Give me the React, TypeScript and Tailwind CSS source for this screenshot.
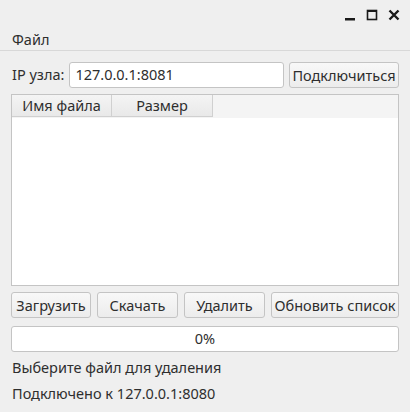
import React from 'react';

const font = { fontFamily: '"Noto Sans", "DejaVu Sans", sans-serif' };

const Btn = ({ children, className = '' }: { children: React.ReactNode; className?: string }) => (
  <button className={`h-[26px] rounded-[3px] border border-[#c4c4c4] bg-gradient-to-b from-[#f8f8f8] to-[#ececec] text-[14.5px] text-[#2e2e2e] leading-none ${className}`}>
    {children}
  </button>
);

export default function App() {
  return (
    <div className="w-[410px] h-[412px] bg-[#efefef] text-[#2e2e2e] text-[14.5px] overflow-hidden" style={font}>
      {/* Title bar */}
      <div className="h-[30px] flex items-center justify-end gap-[10px] pr-[10px]">
        <svg width="12" height="12" viewBox="0 0 12 12"><rect x="1" y="9" width="10" height="2.5" fill="#1a1a1a" /></svg>
        <svg width="12" height="12" viewBox="0 0 12 12"><rect x="1.5" y="1.5" width="9" height="9" fill="none" stroke="#1a1a1a" strokeWidth="1.6" /><rect x="1.5" y="1" width="9" height="2" fill="#1a1a1a" /></svg>
        <svg width="12" height="12" viewBox="0 0 12 12"><path d="M1.5 1.5 L10.5 10.5 M10.5 1.5 L1.5 10.5" stroke="#1a1a1a" strokeWidth="2.4" /></svg>
      </div>

      {/* Menu */}
      <div className="h-[21px] flex items-center px-[12px] border-b border-[#d8d8d8]">Файл</div>

      <div className="px-[11px] pt-[11px]">
        {/* IP row */}
        <div className="flex items-center gap-[5px] h-[26px]">
          <span className="pl-[1px]">IP узла:</span>
          <div className="flex-1 h-[26px] rounded-[3px] border border-[#c4c4c4] bg-white flex items-center px-[5px]">127.0.0.1:8081</div>
          <Btn className="w-[110px]">Подключиться</Btn>
        </div>

        {/* Table */}
        <div className="mt-[6px] h-[192px] border border-[#c4c4c4] bg-white flex flex-col">
          <div className="h-[23px] flex bg-[#f4f4f4] border-b border-[#f4f4f4]">
            <div className="w-[100px] flex items-center justify-center border-r border-b border-[#d0d0d0] bg-gradient-to-b from-[#f4f4f4] to-[#e9e9e9]">Имя файла</div>
            <div className="w-[101px] flex items-center justify-center border-r border-b border-[#d0d0d0] bg-gradient-to-b from-[#f4f4f4] to-[#e9e9e9]">Размер</div>
          </div>
          <div className="flex-1 bg-white" />
        </div>

        {/* Buttons */}
        <div className="mt-[6px] flex gap-[6px]">
          <Btn className="w-[80px]">Загрузить</Btn>
          <Btn className="w-[81px]">Скачать</Btn>
          <Btn className="w-[81px]">Удалить</Btn>
          <Btn className="flex-1">Обновить список</Btn>
        </div>

        {/* Progress */}
        <div className="mt-[8px] h-[26px] rounded-[3px] border border-[#c4c4c4] bg-white flex items-center justify-center">0%</div>

        <div className="mt-[6px] h-[20px] flex items-center px-[1px]">Выберите файл для удаления</div>
        <div className="mt-[6px] h-[20px] flex items-center px-[1px]">Подключено к 127.0.0.1:8080</div>
      </div>
    </div>
  );
}
